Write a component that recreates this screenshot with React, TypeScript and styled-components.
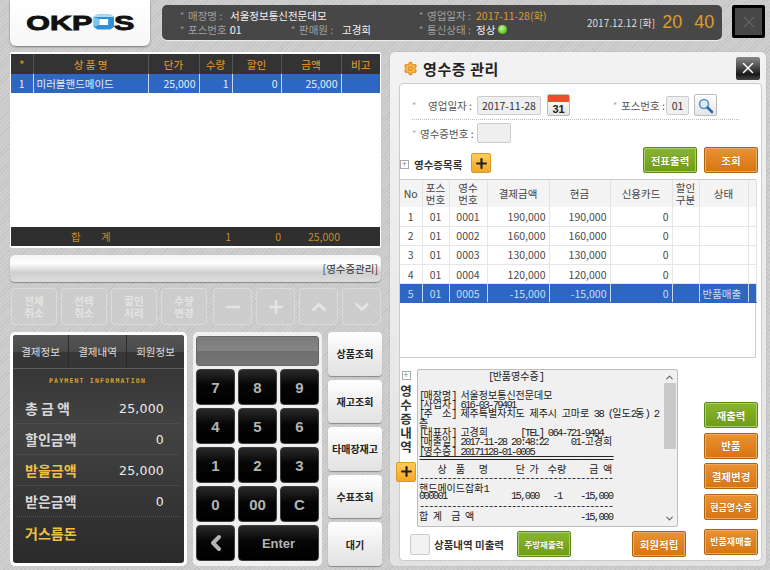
import React from "react";
import styled, { createGlobalStyle } from "styled-components";
import { ChevronDown, ChevronUp, ChevronLeft, Settings, X, Minus, Plus } from "lucide-react";

const KR = `"Noto Sans CJK KR", "Liberation Sans", sans-serif`;
const hatch = `repeating-linear-gradient(135deg,#c4c4c4 0,#c4c4c4 1px,#cfcfcf 1px,#cfcfcf 3px)`;

const Global = createGlobalStyle`
  html, body { margin: 0; padding: 0; background: #c9c9c9; }
  * { box-sizing: border-box; }
  body { font-family: ${KR}; font-size: 11px; }
`;

const Page = styled.div`
  width: 770px; height: 570px; overflow: hidden;
  background: ${hatch};
  display: flex; flex-direction: column;
`;
const TopBar = styled.header`
  height: 52px; flex: none; display: flex; align-items: flex-start; padding-left: 10px;
`;
const LogoCard = styled.div`
  width: 140px; height: 46px; background: linear-gradient(#fff, #f6f6f6);
  border-radius: 0 0 6px 6px; box-shadow: 0 1px 2px #777;
  display: flex; align-items: center; justify-content: center; padding-bottom: 2px;
`;
const LogoText = styled.span`
  font: 700 21px/1 "Liberation Sans", sans-serif; color: #111;
  transform: scaleX(1.45); -webkit-text-stroke: 0.9px #111;
  display: inline-flex; align-items: center;
`;
const InfoBar = styled.div`
  width: 560px; height: 35px; margin: 5px 0 0 12px; background: #474747;
  border-radius: 5px; box-shadow: 0 1px 1px #eee;
  display: flex; align-items: center; padding-left: 18px;
  color: #bdbdbd; font-size: 10.5px;
`;
const InfoGrid = styled.div`
  display: grid; grid-template-columns: 111px 128px 168px; grid-auto-rows: 14px; line-height: 14px;
`;
const InfoItem = styled.div`
  display: flex; white-space: nowrap; align-items: center;
  &::before { content: "*"; width: 8px; flex: none; color: #999; font-size: 9px; }
`;
const InfoKey = styled.span<{ $w: number }>`
  width: ${p => p.$w}px; color: #a0a0a0; flex: none;
`;
const InfoVal = styled.span<{ $tone?: string }>`
  color: ${p => p.$tone || "#f2f2f2"}; display: inline-flex; align-items: center; gap: 3px;
`;
const Dot = styled.i`
  width: 9px; height: 9px; border-radius: 50%; display: inline-block;
  background: radial-gradient(circle at 40% 35%, #c6f59a, #58c51a 70%);
`;
const Clock = styled.div`
  display: flex; align-items: center; color: #ddd; font-size: 10px; white-space: nowrap;
`;
const ClockNum = styled.span<{ $ml: number }>`
  font: 18px "Liberation Sans", sans-serif; color: #e09a2c; margin-left: ${p => p.$ml}px;
`;
const ExitBox = styled.div`
  width: 33px; height: 33px; margin: 5px 0 0 10px; border: 3px solid #000; background: #474747;
  border-radius: 2px; display: flex; align-items: center; justify-content: center; color: #646464;
`;

const Main = styled.main`
  display: flex; gap: 9px; padding-left: 10px; flex: 1; min-height: 0;
`;
const LeftCol = styled.section`
  width: 371px; display: flex; flex-direction: column;
`;
const OrderGrid = styled.div`
  height: 196px; flex: none; border: 1px solid #fff; border-width: 2px 1px; background: #fff;
  border-radius: 2px; display: flex; flex-direction: column;
`;
const Table = styled.table`
  border-collapse: collapse; table-layout: fixed; width: 100%;
`;
const OrderHead = styled.th`
  height: 20px; padding: 0; background: #333; color: #d98d2a; font-weight: 500; font-size: 10.5px;
  border-right: 1px solid #555;
  &:last-child { border-right: 0; }
`;
const OrderCell = styled.td<{ $r?: boolean; $c?: boolean }>`
  height: 19px; padding: 0 3px; background: #2d66c3; color: #e6ecf6; font-size: 10.5px;
  text-align: ${p => (p.$r ? "right" : p.$c ? "center" : "left")};
  border-right: 1px solid #c8d8f0; white-space: nowrap;
  &:last-child { border-right: 0; }
`;
const OrderSpacer = styled.div` flex: 1; `;
const OrderFoot = styled.div`
  height: 19px; background: #2f2f2f; color: #c98a2c; font-size: 10.5px;
  display: grid; grid-template-columns: 148px 52px 20px 50px 59px; align-items: center;
`;
const FootLabel = styled.span` grid-column: 1; padding-left: 60px; word-spacing: 18px; `;
const FootNum = styled.span<{ $col: number }>` grid-column: ${p => p.$col}; text-align: right; `;

const MsgBar = styled.div`
  height: 27px; margin-top: 7px; flex: none; border-radius: 5px;
  background: linear-gradient(#f4f4f4, #ffffff 30%, #cfcfcf 65%, #dcdcdc);
  box-shadow: 0 1px 1px #888; display: flex; align-items: center; justify-content: flex-end;
  padding-right: 3px; color: #333; font-size: 10.5px;
`;
const ActionRow = styled.div`
  height: 37px; margin-top: 6px; flex: none; display: flex; gap: 4px; padding-left: 1px;
`;
const ActionBtn = styled.div<{ $w: number; $ml?: number }>`
  width: ${p => p.$w}px; margin-left: ${p => p.$ml || 0}px;
  border: 1px solid #dadada; border-radius: 4px; background: rgba(205,205,205,.7);
  color: #e4e4e4; font-weight: 700; font-size: 10.5px; line-height: 12px; text-align: center;
  display: flex; align-items: center; justify-content: center; white-space: pre-line;
`;
const BottomRow = styled.div`
  margin-top: 7px; height: 234px; flex: none; display: flex; gap: 6px;
`;
const PayPanel = styled.div`
  width: 177px; border-radius: 5px; background: #fff; padding: 3px; flex: none;
`;
const PayInner = styled.div`
  height: 100%; border-radius: 3px; background: linear-gradient(#2e2e2e, #434343 40%, #2a2a2a);
  display: flex; flex-direction: column;
`;
const PayTabs = styled.div`
  height: 34px; flex: none; display: grid; grid-template-columns: 56px 58px 57px;
  background: linear-gradient(#555 0, #4a4a4a 50%, #363636 51%, #363636);
  border-bottom: 1px solid #5a5a5a; border-radius: 3px 3px 0 0;
`;
const PayTab = styled.div`
  display: flex; align-items: center; justify-content: center; color: #dcdcdc; font-size: 10.5px;
  border-right: 1px solid #2a2a2a;
  &:last-child { border-right: 0; }
`;
const PayTitle = styled.div`
  height: 24px; flex: none; display: flex; align-items: center; justify-content: center;
  font: 700 6.5px "DejaVu Sans Mono", monospace; letter-spacing: 1.2px; color: #d9a52a; padding-right: 2px; white-space: nowrap;
`;
const PayRows = styled.div` padding: 0 4px; `;
const PayRowBox = styled.div`
  height: 31px; display: flex; align-items: center; justify-content: space-between;
  padding: 0 16px 0 8px; border-bottom: 1px dotted #5a5a5a;
  &:last-child { border-bottom: 0; }
`;
const PayLabel = styled.span<{ $gold?: boolean }>`
  font-weight: 700; font-size: 14px; color: ${p => (p.$gold ? "#f0c040" : "#d8d8d8")}; white-space: pre;
`;
const PayValue = styled.span`
  font: 12.5px "DejaVu Sans", sans-serif; letter-spacing: 0.2px; color: #ececec;
`;

const Keypad = styled.div`
  width: 129px; flex: none; background: #f0f0f0; border-radius: 5px; padding: 4px 3px 3px;
  display: flex; flex-direction: column; gap: 3px;
`;
const KeyDisplay = styled.div`
  height: 30px; flex: none; border-radius: 3px;
  background: linear-gradient(#7b7b7b, #868686 50%, #6f6f6f 51%, #757575);
  border: 1px solid #666;
`;
const KeyGrid = styled.div`
  flex: 1; display: grid; grid-template-columns: repeat(3, 1fr); grid-template-rows: repeat(5, 36px); gap: 3px;
`;
const Key = styled.div<{ $span?: number; $size?: number }>`
  grid-column: span ${p => p.$span || 1};
  border-radius: 4px; background: linear-gradient(#2a2a2a, #050505 45%, #000);
  border: 1px solid #3d3d3d; color: #b4b4b4; display: flex; align-items: center; justify-content: center;
  font: 700 ${p => p.$size || 15}px "Liberation Sans", sans-serif;
`;
const SideCol = styled.div`
  width: 54px; flex: none; display: flex; flex-direction: column; gap: 4px;
`;
const SideBtn = styled.div`
  height: 43.6px; border-radius: 4px; background: linear-gradient(#fff, #ececec 60%, #e2e2e2);
  box-shadow: 0 1px 1px #888; display: flex; align-items: center; justify-content: center;
  color: #222; font-weight: 700; font-size: 10px; white-space: nowrap;
`;

const Modal = styled.section`
  width: 376px; height: 514px; flex: none; background: linear-gradient(#f2f2f2, #e2e2e2);
  border-radius: 5px; padding: 1px 4px 5px 9px; display: flex; flex-direction: column;
  box-shadow: 0 0 1px #888;
`;
const ModalHead = styled.div`
  height: 30px; flex: none; display: flex; align-items: center; padding-left: 4px; gap: 5px;
  color: #222; font-weight: 700; font-size: 15px; letter-spacing: .6px;
`;
const GearIcon = styled(Settings)` color: #e58a1e; fill: #f6c15a; `;
const ModalClose = styled.div`
  margin-left: auto; margin-right: 2px; width: 24px; height: 23px; border-radius: 2px;
  background: linear-gradient(#888, #4a4a4a 45%, #1a1a1a 75%, #444); color: #fff;
  display: flex; align-items: center; justify-content: center;
`;
const ModalBody = styled.div`
  flex: 1; background: #fff; border: 1px solid #ccc; border-radius: 4px;
  display: flex; flex-direction: column;
`;
const FormRow = styled.div`
  height: 22px; margin-top: 10px; padding-left: 12px; display: flex; align-items: center; color: #555;
  font-size: 10.5px;
`;
const Star = styled.span` width: 8px; flex: none; color: #aaa; font-size: 9px; `;
const FormGap = styled.span` width: 43px; flex: none; `;
const FieldLabel = styled.span<{ $w: number }>`
  width: ${p => p.$w}px; flex: none; text-align: right; white-space: nowrap;
`;
const Field = styled.div<{ $w: number; $ml: number; $h?: number }>`
  width: ${p => p.$w}px; height: ${p => p.$h || 19}px; margin-left: ${p => p.$ml}px; flex: none;
  background: #efefef; border: 1px solid #ccc; border-radius: 2px;
  display: flex; align-items: center; justify-content: center; color: #333; font-size: 10.5px;
`;
const IconBtn = styled.div<{ $ml: number }>`
  width: 23px; height: 22px; margin-left: ${p => p.$ml}px; flex: none; border: 1px solid #bbb; border-radius: 2px;
  background: linear-gradient(#fff, #e4e4e4); overflow: hidden; display: flex; flex-direction: column; align-items: center; justify-content: center;
`;
const CalTop = styled.div` width: 100%; height: 7px; background: #e8502a; flex: none; `;
const CalNum = styled.div` flex: 1; font: 700 11px/14px "Liberation Sans", sans-serif; color: #222; `;
const DottedLine = styled.div`
  margin: 3px 22px 3px 12px; height: 1px; border-top: 1px dotted #bbb; flex: none;
`;
const Row2 = styled(FormRow)` margin-top: 0; height: 20px; `;
const ListHead = styled.div`
  height: 26px; margin-top: 4px; flex: none; display: flex; align-items: flex-start;
`;
const Expander = styled.span`
  width: 9px; height: 9px; border: 1px solid #aaa; flex: none; color: #888; display: flex; align-items: center; justify-content: center;
  font: 9px/1 "Liberation Sans", sans-serif;
`;
const ListExpander = styled(Expander)` margin-top: 13px; `;
const ListTitle = styled.span`
  margin: 10px 0 0 5px; width: 52px; flex: none; font-weight: 700; font-size: 10.5px; line-height: 15px; color: #333; white-space: nowrap;
`;
const PlusBtn = styled.div<{ $ml?: number }>`
  width: 20px; height: 20px; margin-left: ${p => p.$ml || 0}px; margin-top: 6px; flex: none; border-radius: 2px;
  background: linear-gradient(#ffcb5c, #f4a726); border: 1px solid #d99a2a; color: #222;
  display: flex; align-items: center; justify-content: center;
`;
const ToneBtn = styled.div<{ $tone: "green" | "orange"; $ml?: number; $size?: number; $h?: number }>`
  width: 54px; height: ${p => p.$h || 26}px; flex: none; margin-left: ${p => p.$ml || 0}px; border-radius: 2px;
  border: 1px solid ${p => (p.$tone === "green" ? "#5c8a18" : "#b06412")};
  outline: 1px solid ${p => (p.$tone === "green" ? "#a8cf6a" : "#eba964")}; outline-offset: -2px;
  background: ${p => p.$tone === "green" ? "linear-gradient(#8ab52e, #6f9c18)" : "linear-gradient(#ea9232, #d77512)"};
  color: #fff; font-weight: 700; font-size: ${p => p.$size || 10.5}px; display: flex; align-items: center; justify-content: center;
  white-space: nowrap; text-shadow: 0 0 1px rgba(0,0,0,.4);
`;
const TableBox = styled.div`
  height: 179px; flex: none; margin: 6px 5px 0 -1px; border: 1px solid #ccc; background: #fff;
`;
const ListHeadCell = styled.th`
  height: 27px; padding: 0; background: #f4f4f4; color: #444; font-weight: 400; font-size: 10.5px; line-height: 12px;
  border-right: 1px solid #e2e2e2; white-space: pre-line;
`;
const ListCell = styled.td<{ $sel?: boolean; $r?: boolean; $l?: boolean }>`
  height: 19.2px; padding: 0 3px; font-size: 10.5px; white-space: nowrap;
  background: ${p => (p.$sel ? "#2d66c3" : "#fff")};
  color: ${p => (p.$sel ? "#cfdcf2" : "#4a4a4a")};
  text-align: ${p => (p.$r ? "right" : p.$l ? "left" : "center")};
  border-right: 1px solid ${p => (p.$sel ? "#c8d8f0" : "#e6e6e6")};
  border-bottom: 1px solid ${p => (p.$sel ? "#2d66c3" : "#e6e6e6")};
`;
const Lower = styled.div` display: flex; margin-top: 11px; flex: 1; min-height: 0; `;
const LowerLeft = styled.div` width: 304px; flex: none; display: flex; flex-direction: column; `;
const ReceiptRow = styled.div` display: flex; height: 158px; flex: none; `;
const VerticalTab = styled.div`
  width: 18px; flex: none; display: flex; flex-direction: column; align-items: center; margin-left: -3px;
`;
const VExpander = styled(Expander)` margin-top: 2px; `;
const VText = styled.div`
  width: 14px; margin-top: 4px; font-weight: 700; font-size: 12.5px; line-height: 13.9px; color: #333; text-align: center; white-space: pre-line;
`;
const VPlus = styled(PlusBtn)` margin-top: 8px; margin-left: 0; `;
const ReceiptBox = styled.div`
  width: 261px; margin-left: 2px; flex: none; display: flex; background: #f0f0f0; border: 1px solid #bdbdbd; border-radius: 2px;
`;
const ReceiptText = styled.pre`
  margin: 0; padding: 1px 0 0 1px; flex: 1; color: #222;
  font: 10.5px/9.35px "Liberation Mono", monospace; letter-spacing: -1.7px; white-space: pre;
`;
const RLine = styled.div` height: 9.35px; `;
const Hangul = styled.span`
  font-family: "Noto Sans CJK KR", sans-serif; font-size: 10px; letter-spacing: 0;
`;
const Scroll = styled.div`
  width: 13px; flex: none; display: flex; flex-direction: column; align-items: center; color: #666; padding: 2px 0; margin-right: 1px;
`;
const ScrollThumb = styled.div` width: 12px; height: 66px; background: #c9c9c9; `;
const ScrollGap = styled.div` flex: 1; `;
const BottomActions = styled.div`
  display: flex; align-items: center; margin-top: 4px; height: 26px; padding-left: 10px;
`;
const Check = styled.div`
  width: 20px; height: 21px; background: #f2f2f2; border: 1px solid #ccc; border-radius: 2px; flex: none;
`;
const CheckLabel = styled.span`
  margin-left: 4px; width: 83px; flex: none; font-weight: 700; font-size: 10.5px; color: #333; white-space: nowrap;
`;
const LowerRight = styled.div`
  flex: 1; display: flex; flex-direction: column; gap: 4.7px; padding-top: 33px;
`;
const LastTone = styled(ToneBtn)` margin-top: 4px; `;
const SearchSvg = () => (
  <svg width="17" height="17" viewBox="0 0 17 17">
    <circle cx="7" cy="7" r="4.5" fill="#dcecf8" stroke="#5b8fc4" strokeWidth="1.6" />
    <path d="M10.5 10.5L15 15" stroke="#2f6aa8" strokeWidth="2.6" strokeLinecap="round" />
  </svg>
);
const LogoO = () => (
  <svg width="15" height="16" viewBox="0 0 15 16">
    <path d="M3 0.5H12L14.5 3V13L12 15.5H3L0.5 13V3z" fill="#2f8fd8" />
    <path d="M3 0.5H12L14.5 3H0.5z" fill="#a8dcf7" />
    <path d="M0.5 3L4.5 5V11L0.5 13z" fill="#7cc4ee" />
    <path d="M4.5 5H10.5V11H4.5z" fill="#fff" />
  </svg>
);

const orderCols = [22, 115, 51, 33, 49, 60, 39];
const listCols = [22, 27, 38, 62, 61, 62, 27, 49, 8];
const rows = [
  ["1", "01", "0001", "190,000", "190,000", "0", "", ""],
  ["2", "01", "0002", "160,000", "160,000", "0", "", ""],
  ["3", "01", "0003", "130,000", "130,000", "0", "", ""],
  ["4", "01", "0004", "120,000", "120,000", "0", "", ""],
  ["5", "01", "0005", "-15,000", "-15,000", "0", "", "반품매출"],
];
const pays: [string, string, boolean][] = [
  ["총 금 액", "25,000", false],
  ["할인금액", "0", false],
  ["받을금액", "25,000", true],
  ["받은금액", "0", false],
  ["거스름돈", "", true],
];
const receipt = [
  "               [반품영수증]",
  " ",
  "[매장명] 서울정보통신전문데모",
  "[사업자] 616-03-79491",
  "[주  소] 제주특별자치도 제주시 고마로 38 (일도2동) 2",
  "층",
  "[대표자] 고경희       [TEL] 064-721-9494",
  "[매출일] 2017-11-28 20:48:22     01-고경희",
  "[영수증] 20171128-01-0005",
  "==========================================",
  "    상  품   명      단 가  수량     금 액",
  "------------------------------------------",
  "핸드메이드잡화1",
  "000001              15,000   -1    -15,000",
  "------------------------------------------",
  "합 계  금 액                       -15,000",
];

const ReceiptLine = ({ text }: { text: string }) => (
  <RLine>
    {text.split(/([가-힣]+)/).map((part, i) =>
      i % 2 ? <Hangul key={i}>{part}</Hangul> : part
    )}
  </RLine>
);

export default function App() {
  return (
    <Page>
      <Global />
      <TopBar>
        <LogoCard>
          <LogoText>OKP<LogoO />S</LogoText>
        </LogoCard>
        <InfoBar>
          <InfoGrid>
            <InfoItem><InfoKey $w={42}>매장명 :</InfoKey><InfoVal>서울정보통신전문데모</InfoVal></InfoItem>
            <span />
            <InfoItem><InfoKey $w={49}>영업일자 :</InfoKey><InfoVal $tone="#dd9a2e">2017-11-28(화)</InfoVal></InfoItem>
            <InfoItem><InfoKey $w={42}>포스번호 :</InfoKey><InfoVal>01</InfoVal></InfoItem>
            <InfoItem><InfoKey $w={43}>판매원 :</InfoKey><InfoVal>고경희</InfoVal></InfoItem>
            <InfoItem><InfoKey $w={49}>통신상태 :</InfoKey><InfoVal>정상<Dot /></InfoVal></InfoItem>
          </InfoGrid>
          <Clock>2017.12.12 [화]<ClockNum $ml={7}>20</ClockNum><ClockNum $ml={12}>40</ClockNum></Clock>
        </InfoBar>
        <ExitBox><X size={18} strokeWidth={1.5} /></ExitBox>
      </TopBar>
      <Main>
        <LeftCol>
          <OrderGrid>
            <Table>
              <colgroup>{orderCols.map((w, i) => <col key={i} width={w} />)}</colgroup>
              <thead>
                <tr>
                  {["*", "상 품 명", "단가", "수량", "할인", "금액", "비고"].map(h => <OrderHead key={h}>{h}</OrderHead>)}
                </tr>
              </thead>
              <tbody>
                <tr>
                  <OrderCell $c>1</OrderCell>
                  <OrderCell>미러볼핸드메이드</OrderCell>
                  <OrderCell $r>25,000</OrderCell>
                  <OrderCell $r>1</OrderCell>
                  <OrderCell $r>0</OrderCell>
                  <OrderCell $r>25,000</OrderCell>
                  <OrderCell />
                </tr>
              </tbody>
            </Table>
            <OrderSpacer />
            <OrderFoot>
              <FootLabel>합 계</FootLabel>
              <FootNum $col={3}>1</FootNum>
              <FootNum $col={4}>0</FootNum>
              <FootNum $col={5}>25,000</FootNum>
            </OrderFoot>
          </OrderGrid>
          <MsgBar>[영수증관리]</MsgBar>
          <ActionRow>
            <ActionBtn $w={46}>{"전체\n취소"}</ActionBtn>
            <ActionBtn $w={46}>{"선택\n취소"}</ActionBtn>
            <ActionBtn $w={46}>{"할인\n처리"}</ActionBtn>
            <ActionBtn $w={46}>{"수량\n변경"}</ActionBtn>
            <ActionBtn $w={39} $ml={2}><Minus size={20} strokeWidth={3} /></ActionBtn>
            <ActionBtn $w={39}><Plus size={20} strokeWidth={3} /></ActionBtn>
            <ActionBtn $w={39}><ChevronUp size={22} strokeWidth={3} /></ActionBtn>
            <ActionBtn $w={39}><ChevronDown size={22} strokeWidth={3} /></ActionBtn>
          </ActionRow>
          <BottomRow>
            <PayPanel>
              <PayInner>
                <PayTabs>
                  <PayTab>결제정보</PayTab>
                  <PayTab>결제내역</PayTab>
                  <PayTab>회원정보</PayTab>
                </PayTabs>
                <PayTitle>PAYMENT INFORMATION</PayTitle>
                <PayRows>
                  {pays.map(([l, v, g]) => (
                    <PayRowBox key={l}>
                      <PayLabel $gold={g}>{l}</PayLabel>
                      <PayValue>{v}</PayValue>
                    </PayRowBox>
                  ))}
                </PayRows>
              </PayInner>
            </PayPanel>
            <Keypad>
              <KeyDisplay />
              <KeyGrid>
                {["7", "8", "9", "4", "5", "6", "1", "2", "3", "0", "00", "C"].map(k => <Key key={k}>{k}</Key>)}
                <Key><ChevronLeft size={24} strokeWidth={4} /></Key>
                <Key $span={2} $size={13}>Enter</Key>
              </KeyGrid>
            </Keypad>
            <SideCol>
              <SideBtn>상품조회</SideBtn>
              <SideBtn>재고조회</SideBtn>
              <SideBtn>타매장재고</SideBtn>
              <SideBtn>수표조회</SideBtn>
              <SideBtn>대기</SideBtn>
            </SideCol>
          </BottomRow>
        </LeftCol>
        <Modal>
          <ModalHead>
            <GearIcon size={15} />
            영수증 관리
            <ModalClose><X size={18} strokeWidth={2} /></ModalClose>
          </ModalHead>
          <ModalBody>
            <FormRow>
              <Star>*</Star>
              <FieldLabel $w={52}>영업일자 :</FieldLabel>
              <Field $w={64} $ml={5}>2017-11-28</Field>
              <IconBtn $ml={6}><CalTop /><CalNum>31</CalNum></IconBtn>
              <FormGap />
              <Star>*</Star>
              <FieldLabel $w={40}>포스번호 :</FieldLabel>
              <Field $w={23} $ml={5}>01</Field>
              <IconBtn $ml={5}><SearchSvg /></IconBtn>
            </FormRow>
            <DottedLine />
            <Row2>
              <Star>*</Star>
              <FieldLabel $w={52}>영수증번호 :</FieldLabel>
              <Field $w={34} $ml={5} $h={20} />
            </Row2>
            <ListHead>
              <ListExpander>+</ListExpander>
              <ListTitle>영수증목록</ListTitle>
              <PlusBtn $ml={5}><Plus size={15} strokeWidth={3.5} /></PlusBtn>
              <ToneBtn $tone="green" $ml={152}>전표출력</ToneBtn>
              <ToneBtn $tone="orange" $ml={7}>조회</ToneBtn>
            </ListHead>
            <TableBox>
              <Table>
                <colgroup>{listCols.map((w, i) => <col key={i} width={w} />)}</colgroup>
                <thead>
                  <tr>
                    {["No", "포스\n번호", "영수\n번호", "결제금액", "현금", "신용카드", "할인\n구분", "상태", ""].map((h, i) => (
                      <ListHeadCell key={i}>{h}</ListHeadCell>
                    ))}
                  </tr>
                </thead>
                <tbody>
                  {rows.map(r => {
                    const sel = r[0] === "5";
                    return (
                      <tr key={r[0]}>
                        {r.map((c, i) => (
                          <ListCell key={i} $sel={sel} $r={i >= 3 && i <= 5} $l={i === 7}>{c}</ListCell>
                        ))}
                        <ListCell $sel={sel} />
                      </tr>
                    );
                  })}
                </tbody>
              </Table>
            </TableBox>
            <Lower>
              <LowerLeft>
                <ReceiptRow>
                  <VerticalTab>
                    <VExpander>+</VExpander>
                    <VText>{"영\n수\n증\n내\n역"}</VText>
                    <VPlus><Plus size={15} strokeWidth={3.5} /></VPlus>
                  </VerticalTab>
                  <ReceiptBox>
                    <ReceiptText>
                      {receipt.map((l, i) => <ReceiptLine key={i} text={l} />)}
                    </ReceiptText>
                    <Scroll>
                      <ChevronUp size={11} strokeWidth={2.5} />
                      <ScrollThumb />
                      <ScrollGap />
                      <ChevronDown size={11} strokeWidth={2.5} />
                    </Scroll>
                  </ReceiptBox>
                </ReceiptRow>
                <BottomActions>
                  <Check />
                  <CheckLabel>상품내역 미출력</CheckLabel>
                  <ToneBtn $tone="green" $size={8.5}>주방재출력</ToneBtn>
                  <ToneBtn $tone="orange" $ml={61}>회원적립</ToneBtn>
                </BottomActions>
              </LowerLeft>
              <LowerRight>
                <ToneBtn $tone="green">재출력</ToneBtn>
                <ToneBtn $tone="orange">반품</ToneBtn>
                <ToneBtn $tone="orange">결제변경</ToneBtn>
                <ToneBtn $tone="orange" $size={9}>현금영수증</ToneBtn>
                <LastTone $tone="orange" $size={9}>반품재매출</LastTone>
              </LowerRight>
            </Lower>
          </ModalBody>
        </Modal>
      </Main>
    </Page>
  );
}
